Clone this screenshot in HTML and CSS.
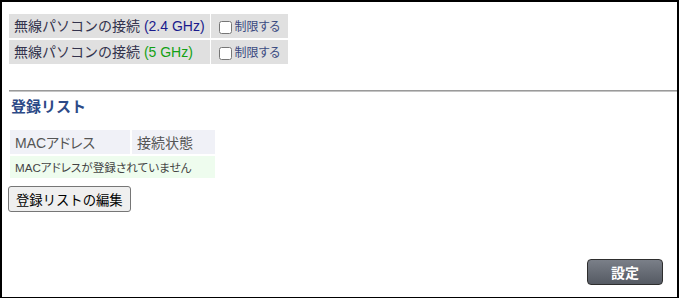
FILE: index.html
```html
<!DOCTYPE html>
<html lang="ja">
<head>
<meta charset="utf-8">
<link rel="stylesheet" href="styles.css">
</head>
<body>
<div class="frame">
  <table class="limit">
    <tr>
      <td class="label">無線パソコンの接続 <span class="ghz24">(2.4 GHz)</span></td>
      <td class="opt"><label class="chk"><input type="checkbox">制限する</label></td>
    </tr>
    <tr>
      <td class="label">無線パソコンの接続 <span class="ghz5">(5 GHz)</span></td>
      <td class="opt"><label class="chk"><input type="checkbox">制限する</label></td>
    </tr>
  </table>
  <hr class="sep">
  <h3 class="title">登録リスト</h3>
  <table class="list">
    <tr class="head">
      <th class="c-mac">MACアドレス</th>
      <th class="c-state">接続状態</th>
    </tr>
    <tr class="empty">
      <td colspan="2">MACアドレスが登録されていません</td>
    </tr>
  </table>
  <div class="editrow"><button class="edit" type="button">登録リストの編集</button></div>
  <div class="actions"><button class="submit" type="button">設定</button></div>
</div>
</body>
</html>
```
FILE: styles.css
```css
html, body {
  margin: 0;
  padding: 0;
  background: #fff;
}
body {
  font-family: "Liberation Sans", "Noto Sans CJK JP", sans-serif;
}
.frame {
  box-sizing: border-box;
  width: 679px;
  height: 298px;
  border: 1px solid #000;
  border-width: 2px 2px 1px 2px;
  padding: 10px 0 0 6px;
  display: flex;
  flex-direction: column;
  align-items: flex-start;
}
.limit {
  border-collapse: separate;
  border-spacing: 1px 2px;
}
.limit td {
  background: #e0e0e0;
  height: 24px;
  padding: 0 5px;
  box-sizing: border-box;
  white-space: nowrap;
  line-height: 20px;
}
.limit .label {
  width: 200px;
  font-size: 14px;
  color: #33334d;
}
.ghz24 { color: #1a1a8c; }
.ghz5 { color: #13a013; }
.limit .opt {
  width: 77px;
  padding-left: 8px;
}
.chk {
  display: flex;
  align-items: center;
  font-size: 12px;
  font-feature-settings: "palt";
  color: #3a4a80;
  padding-top: 2px;
}
.chk input {
  width: 13px;
  height: 13px;
  margin: 0 3px 0 0;
}
.sep {
  align-self: stretch;
  margin: 24px 0 0 1px;
  height: 0;
  border: 0;
  border-top: 1px solid #9a9a9a;
  border-bottom: 1px solid #c4c4c4;
}
.title {
  margin: 5px 0 0 3px;
  font-size: 15px;
  line-height: 20px;
  font-weight: bold;
  color: #2d4a87;
}
.list {
  margin: 11px 0 0 0;
  border-collapse: separate;
  border-spacing: 2px;
}
.list th {
  background: #f0f1f7;
  height: 24px;
  padding: 0 5px;
  box-sizing: border-box;
  text-align: left;
  font-weight: normal;
  font-size: 14px;
  color: #555;
  font-feature-settings: "palt";
  white-space: nowrap;
}
.list .c-mac { width: 120px; }
.list .c-state { width: 83px; }
.list .empty td {
  background: #eefcee;
  height: 22px;
  padding: 0 5px;
  box-sizing: border-box;
  font-size: 11.6px;
  font-feature-settings: "palt";
  color: #444;
  white-space: nowrap;
}
.editrow {
  margin-top: 6px;
}
.edit {
  box-sizing: border-box;
  height: 26px;
  padding: 0 7px;
  font-family: "Liberation Sans", "Noto Sans CJK JP", sans-serif;
  font-size: 13.33px;
  color: #000;
  background: #efefef;
  border: 1px solid #767676;
  border-radius: 3px;
}
.actions {
  margin-top: auto;
  align-self: stretch;
  display: flex;
  justify-content: flex-end;
  padding: 0 14px 12px 0;
}
.submit {
  box-sizing: border-box;
  width: 76px;
  height: 26px;
  font-family: "Liberation Sans", "Noto Sans CJK JP", sans-serif;
  font-size: 14px;
  font-weight: bold;
  color: #fff;
  background: linear-gradient(#7a7f88, #555a63);
  border: 1px solid #2e2e2e;
  border-radius: 4px;
  padding: 0;
}
```
